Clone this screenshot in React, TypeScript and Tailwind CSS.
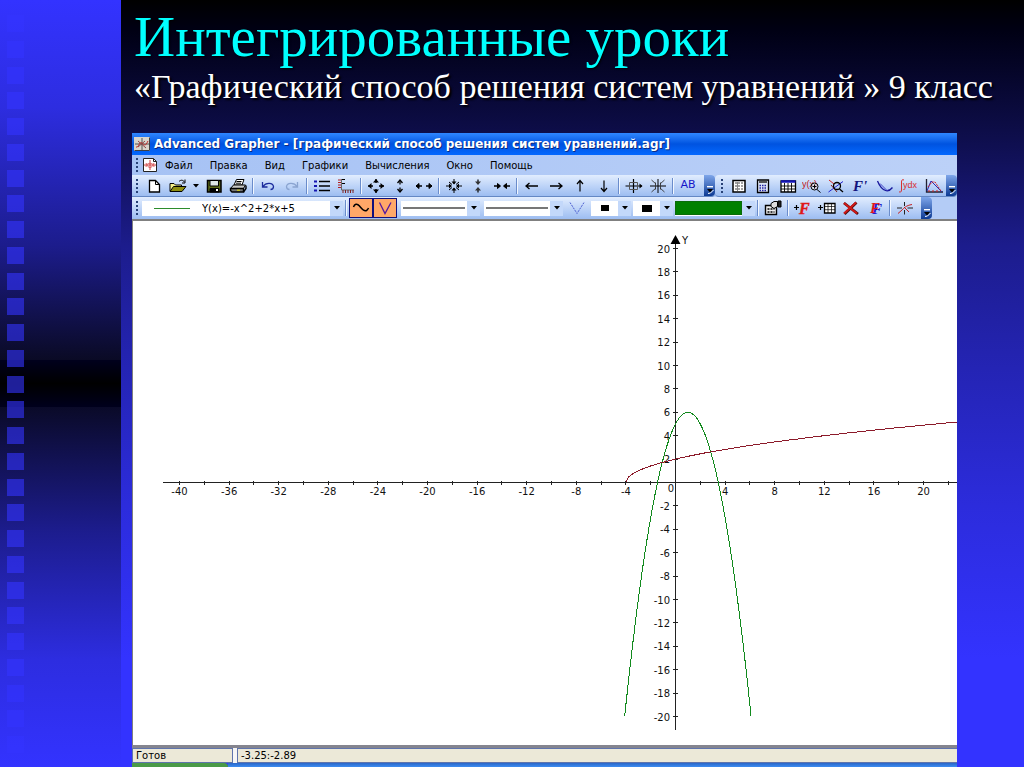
import React from "react";

const menuItems = ["Файл", "Правка", "Вид", "Графики", "Вычисления", "Окно", "Помощь"];

const Icon: React.FC<{ children: React.ReactNode }> = ({ children }) => (
  <svg
    viewBox="0 0 20 16"
    className="block h-4 w-5 shrink-0"
    fill="none"
    stroke="#000"
    aria-hidden="true"
  >
    {children}
  </svg>
);

const ToolButton: React.FC<{
  label: string;
  active?: boolean;
  children: React.ReactNode;
}> = ({ label, active, children }) => (
  <button
    type="button"
    aria-label={label}
    className={
      active
        ? "flex h-5 w-6 shrink-0 items-center justify-center border border-[#10107c] bg-[#ffa868]"
        : "flex h-5 w-6 shrink-0 items-center justify-center"
    }
  >
    {children}
  </button>
);

const Separator = () => (
  <div className="flex w-1.5 shrink-0 justify-center">
    <div className="h-4 w-px bg-[#6a8ccb]" />
    <div className="h-4 w-px bg-[#f1f7ff]" />
  </div>
);

const Grip = () => (
  <div className="flex w-2.5 shrink-0 flex-col items-center gap-0.5">
    <div className="size-0.5 bg-[#274176]" />
    <div className="size-0.5 bg-[#274176]" />
    <div className="size-0.5 bg-[#274176]" />
    <div className="size-0.5 bg-[#274176]" />
  </div>
);

const Overflow: React.FC<{ label: string }> = ({ label }) => (
  <button
    type="button"
    aria-label={label}
    className="flex h-full w-[11px] shrink-0 items-end justify-center rounded-r-sm bg-linear-to-b from-[#7fa6ea] to-[#0c3a94] pb-0.5"
  >
    <svg viewBox="0 0 8 8" className="block size-2" fill="#000" aria-hidden="true">
      <path d="M1 0h6v1.4H1z" fill="#fff" />
      <path d="M1 3h6L4 6.5z" />
      <path d="M2 7.5L4.5 7l3-3" stroke="#fff" fill="none" />
    </svg>
  </button>
);

const DropArrow = () => (
  <span className="flex h-[15px] w-[13px] shrink-0 items-center justify-center bg-[#c3d8fa]">
    <svg viewBox="0 0 6 4" className="block h-1 w-1.5" aria-hidden="true">
      <path d="M0 0h6L3 3.5z" fill="#000" />
    </svg>
  </span>
);

const Combo: React.FC<{
  label: string;
  options: string[];
  width: string;
  children: React.ReactNode;
}> = ({ label, options, width, children }) => (
  <label className={`relative flex h-[15px] shrink-0 items-center bg-white ${width}`}>
    <span className="flex flex-1 items-center justify-center">{children}</span>
    <DropArrow />
    <select aria-label={label} className="absolute inset-0 opacity-0">
      {options.map((option) => (
        <option key={option}>{option}</option>
      ))}
    </select>
  </label>
);

const NewIcon = () => (
  <Icon>
    <path d="M5.5 2.5h6l4 4v7.5h-10z" fill="#fff" strokeWidth="1.3" />
    <path d="M11.5 2.5v4h4" />
  </Icon>
);

const OpenIcon = () => (
  <Icon>
    <path d="M2 13V5.500h4l1.500 1.500h6V8" fill="#f5f08a" />
    <path d="M2 13.500L5.500 8.500H18L14 13.500z" fill="#8f8f10" />
    <path d="M11 3.500c2-2 4-1.500 5.500.5M17 1.500V5h-3" />
  </Icon>
);

const SaveIcon = () => (
  <Icon>
    <path d="M3.500 2.500h13.500v11.500h-13.500z" fill="#5c6b18" strokeWidth="1.500" />
    <path d="M6 2.500h8.500V8H6z" fill="#dfe7e7" />
    <path d="M6 10.500h9V14H6z" fill="#000" />
    <path d="M12 11h2v2h-2z" fill="#fff" stroke="none" />
  </Icon>
);

const PrintIcon = () => (
  <Icon>
    <path d="M6 7L8.500 1.500H16L14 7z" fill="#fff" />
    <path d="M8.500 3.500h5M8 5.200h5" />
    <path d="M2.500 10.500L5.500 7H17.500L15.500 10.500z" fill="#c8c8c8" />
    <path d="M2.500 10.500h13V14H4L2.500 12.500z" fill="#777" strokeWidth="1.400" />
    <path d="M15.500 14L18 10.500V7.500" strokeWidth="1.400" />
    <path d="M9 12.200h3" stroke="#e8e000" />
  </Icon>
);

const ListIcon = () => (
  <Icon>
    <path d="M2 3.500h3M2 8h3M2 12.500h3" stroke="#1515b0" strokeWidth="2.200" />
    <path d="M7 3.500h11M7 8h11M7 12.500h11" strokeWidth="1.300" />
  </Icon>
);

const RulerIcon = () => (
  <Icon>
    <path d="M5.500 1v11H18" stroke="#666" />
    <path d="M2 2h3M2 4.500h3M2 7h3M2 9.500h3" stroke="#b02020" />
    <path d="M7 12v3M9.500 12v3M12 12v3M14.500 12v3M17 12v3" stroke="#802020" />
    <path d="M6 1.500h3M6 5.500h3" />
  </Icon>
);

const OutAllIcon = () => (
  <Icon>
    <path d="M10 1v4M10 15v-4M2 8h5M18 8h-5" strokeWidth="1.300" />
    <path
      d="M7 4.500L10 1l3 3.500zM7 11.500l3 3.500 3-3.500zM5.500 5L2 8l3.500 3zM14.500 5L18 8l-3.500 3z"
      fill="#000"
      stroke="none"
    />
  </Icon>
);

const OutVerticalIcon = () => (
  <Icon>
    <path d="M10 2v4.500M10 14v-4.500" strokeWidth="1.300" />
    <path d="M7.500 5L10 2l2.500 3M7.500 11l2.500 3 2.500-3" strokeWidth="1.300" />
  </Icon>
);

const OutHorizontalIcon = () => (
  <Icon>
    <path d="M2 8h6M12 8h6" strokeWidth="1.500" />
    <path d="M5 5.500L2 8l3 2.500zM15 5.500L18 8l-3 2.500z" fill="#000" />
  </Icon>
);

const InAllIcon = () => (
  <Icon>
    <path d="M10 1v5M10 15v-5M2 8h5M18 8h-5M5 4l3 2.500M15 4l-3 2.500M5 12l3-2.500M15 12l-3-2.500" />
    <path
      d="M7.500 3.500L10 6.500l2.500-3zM7.500 12.500L10 9.500l2.500 3zM5 5.500L8 8l-3 2.500zM15 5.500L12 8l3 2.500z"
      fill="#000"
      stroke="none"
    />
  </Icon>
);

const InVerticalIcon = () => (
  <Icon>
    <path d="M10 1.500v4M10 14.500v-4" strokeWidth="1.200" />
    <path d="M7 3.500L10 7l3-3.500zM7 12.500L10 9l3 3.500z" fill="#333" stroke="none" />
  </Icon>
);

const InHorizontalIcon = () => (
  <Icon>
    <path d="M2 8h6M12 8h6" strokeWidth="1.500" />
    <path d="M5.500 5.500L8.500 8l-3 2.500zM14.500 5.500L11.500 8l3 2.500z" fill="#000" />
  </Icon>
);

const GridZoomIcon = () => (
  <Icon>
    <path d="M1.500 8H18M9.500 1v14" strokeWidth="1.200" />
    <path d="M5.500 4.500h8v7h-8z" stroke="#555" />
    <path d="M15.500 5.500L18.500 8l-3 2.500z" fill="#000" stroke="none" />
  </Icon>
);

const CenterIcon = () => (
  <Icon>
    <path d="M2 8h16M10 1v14" />
    <path
      d="M7.500 4.500v7M12.500 4.500v7M3.500 2l4.500 4M16.500 2l-4.500 4M3.500 14l4.500-4M16.500 14l-4.500-4"
      stroke="#333"
      strokeWidth=".9"
    />
  </Icon>
);

const GridSheetIcon = () => (
  <Icon>
    <path d="M4 2.500h12v11.500H4z" fill="#fff" strokeWidth="1.500" />
    <path d="M6 5h8M6 8h8M6 11h8" strokeDasharray="2 1" stroke="#444" />
    <path d="M8.500 4v9" stroke="#888" />
  </Icon>
);

const CalculatorIcon = () => (
  <Icon>
    <path d="M4.500 2h11v12.500h-11z" fill="#dce4f4" strokeWidth="1.300" />
    <path d="M6 4h8" strokeWidth="1.800" stroke="#444" />
    <path
      d="M6.500 7.500h7M6.500 10h7M6.500 12.500h7"
      stroke="#2020a0"
      strokeDasharray="1.500 1"
      strokeWidth="1.500"
    />
  </Icon>
);

const TableIcon = () => (
  <Icon>
    <path d="M3 3h14.500v11H3z" fill="#fff" strokeWidth="1.300" />
    <path d="M3 3.500h14.500" stroke="#1414b4" strokeWidth="2.500" />
    <path d="M3 8h14.500M3 11h14.500M6.500 5v9M10 5v9M13.500 5v9" strokeWidth=".9" />
  </Icon>
);

const EvaluateIcon = () => (
  <Icon>
    <text x="0" y="9" fill="#c01414" stroke="none" className="font-['Liberation_Sans'] text-[9px]">
      y(x)
    </text>
    <circle cx="12.500" cy="8.500" r="3.500" fill="#eee" fillOpacity=".6" />
    <path d="M15 11.500l3.500 3M12.500 6.500v4M10.500 8.500h4" />
  </Icon>
);

const IntersectIcon = () => (
  <Icon>
    <path d="M3 2l5 4" stroke="#d02020" />
    <path d="M2.500 14L17 3.500" stroke="#2020d0" />
    <path d="M5 7l6 7" stroke="#802020" />
    <circle cx="11" cy="8" r="3.500" strokeWidth="1.300" />
    <path d="M13.500 11l3.500 3" strokeWidth="1.300" />
  </Icon>
);

const DerivativeIcon = () => (
  <Icon>
    <text
      x="2"
      y="13"
      fill="#14147c"
      stroke="none"
      className="font-['Liberation_Serif'] text-[15px] font-bold italic"
    >
      F'
    </text>
  </Icon>
);

const TangentIcon = () => (
  <Icon>
    <path d="M2.500 3c2 5 4 8 8 9.500 3 1 5-.5 7-3" stroke="#18189c" strokeWidth="1.300" />
    <path d="M5 5.500l7.500 7.500" stroke="#4040c8" />
  </Icon>
);

const IntegralIcon = () => (
  <Icon>
    <path d="M5 2c-2-1-2.500.5-2.500 2v8c0 2-1 2.500-2.500 1.800" stroke="#d83030" />
    <text x="4" y="10" fill="#d83030" stroke="none" className="font-['Liberation_Sans'] text-[9px]">
      ydx
    </text>
  </Icon>
);

const PlotIcon = () => (
  <Icon>
    <path d="M2.500 1v13H19" strokeWidth="1.300" stroke="#223" />
    <path d="M3 13l4-10 6 6 5 5" stroke="#2a2ab0" />
    <path d="M4 9l4-5h3l2 3 4 6" stroke="#d02020" strokeDasharray="2 1" />
    <path d="M5 14v-2M9 14v-2M13 14v-2" stroke="#d02020" />
  </Icon>
);

const WaveIcon = () => (
  <Icon>
    <path d="M2.500 7c1-3 3.500-4 6-1s4.500 6 7 4.500c1-.6 1.500-1.500 2-2.500" strokeWidth="1.500" />
  </Icon>
);

const VIcon = () => (
  <Icon>
    <path d="M4.500 2.500L10 13.500 16 2.500" stroke="#5418a0" strokeWidth="1.300" />
  </Icon>
);

const DottedVIcon = () => (
  <Icon>
    <path d="M3 2.500l7 11 7-11" stroke="#4a5cd0" strokeDasharray="2 1" />
  </Icon>
);

const PropertiesIcon = () => (
  <Icon>
    <path d="M2.500 5.500h11v9h-11z" fill="#eee" strokeWidth="1.400" />
    <path d="M8 3.500l3-2h3.500v5l-3.500 2-3-2z" fill="#ddd" />
    <path d="M15 1h3v6h-3z" fill="#222" />
    <path d="M4.500 9h7M4.500 12h7" strokeDasharray="2 1" strokeWidth="1.300" />
  </Icon>
);

const AddFunctionIcon = () => (
  <Icon>
    <path d="M1 7.500h5M3.500 5v5" strokeWidth="1.200" />
    <text
      x="6"
      y="14"
      fill="#e01818"
      stroke="#e01818"
      strokeWidth=".4"
      className="font-['Liberation_Serif'] text-[16px] font-bold italic"
    >
      F
    </text>
  </Icon>
);

const AddTableIcon = () => (
  <Icon>
    <path d="M1 7.500h5M3.500 5v5" strokeWidth="1.200" />
    <path d="M7.500 3.500h10.500v9.500H7.500z" fill="#fff" strokeWidth="1.300" />
    <path d="M7.500 6.500H18M7.500 9.700H18M11 4v9M14.500 4v9" strokeWidth=".7" />
  </Icon>
);

const DeleteIcon = () => (
  <Icon>
    <path d="M3 3l14 11M3.500 14L15.500 2.500" stroke="#501010" strokeWidth="2.800" />
    <path d="M3 3l13 10.500M3 13.500L15 2.500" stroke="#d01818" strokeWidth="2" />
  </Icon>
);

const TraceIcon = () => (
  <Icon>
    <path d="M2 8h5M9.500 2v4M12.500 8H18M9.500 10v4.500" stroke="#222" />
    <path d="M3 13.500l4-3.500c2-2 4-4.500 10-5.500M9 7l5 5" stroke="#c82020" />
  </Icon>
);

const AppIcon = () => (
  <svg viewBox="0 0 16 14" className="block h-3.5 w-4 shrink-0" fill="none" aria-hidden="true">
    <path d="M0 0h16v14H0z" fill="#d8d4cc" />
    <path d="M.5 13.500h15V.5" stroke="#404040" />
    <path d="M1 7h14M8 1v12" stroke="#555" />
    <path d="M2 10c3 1 3-6 6-4s3 4 6-2" stroke="#c02828" />
    <path d="M4 4l8 7M4 10l7-6" stroke="#8a4848" />
  </svg>
);

const DocIcon = () => (
  <svg viewBox="0 0 16 14" className="block h-3.5 w-4 shrink-0" fill="none" aria-hidden="true">
    <path d="M1.500.5h10l3 3v10h-13z" fill="#fff" stroke="#222" />
    <path d="M11.500.5v3h3" stroke="#222" />
    <path d="M2 7h12M8 2v10" stroke="#d04040" />
    <path d="M4 9c0-5 8-5 8 0M4 5c2 6 6 6 8 0" stroke="#d86060" />
  </svg>
);

// graph geometry, in viewBox units
const ORIGIN_X = 542.5;
const ORIGIN_Y = 261.5;
const STEP_X = 12.4;
const STEP_Y = 11.7;

const toX = (x: number) => ORIGIN_X + x * STEP_X;
const toY = (y: number) => ORIGIN_Y - y * STEP_Y;

const range = (from: number, to: number, step: number) => {
  const values: number[] = [];
  for (let v = from; v <= to + 1e-9; v += step) values.push(v);
  return values;
};

const curve = (fn: (x: number) => number, from: number, to: number) =>
  range(from, to, (to - from) / 120)
    .map((x) => `${toX(x).toFixed(1)},${toY(fn(x)).toFixed(1)}`)
    .join(" ");

const Graph = () => (
  <svg
    viewBox="0 0 824 524"
    className="block w-full font-['DejaVu_Sans',sans-serif] text-[10px]"
    role="img"
    aria-label="Y(x)=-x^2+2*x+5"
  >
    <g stroke="#222" fill="none" shapeRendering="crispEdges">
      <path d={`M30 ${ORIGIN_Y}H824M${ORIGIN_X} 16V509`} />
      {range(-40, 22, 2).map((x) => (
        <path key={x} d={`M${toX(x)} ${ORIGIN_Y - 2}v4`} />
      ))}
      {range(-20, 20, 2).map((y) => (
        <path key={y} d={`M${ORIGIN_X - 2.5} ${toY(y)}h5`} />
      ))}
    </g>
    <path d="M542.500 14l5 9h-10z" fill="#000" />
    <g fill="#111">
      {range(-40, 20, 4)
        .filter((x) => x !== 0)
        .map((x) => (
          <text key={x} x={toX(x)} y="274" textAnchor="middle">
            {x}
          </text>
        ))}
      {range(-20, 20, 2)
        .filter((y) => y !== 0)
        .map((y) => (
          <text key={y} x="537" y={toY(y) + 4} textAnchor="end">
            {y}
          </text>
        ))}
      <text x="541" y="271" textAnchor="end">
        0
      </text>
      <text x="549" y="23">
        Y
      </text>
    </g>
    <polyline
      points={curve((x) => -x * x + 2 * x + 5, 1 - Math.sqrt(26), 1 + Math.sqrt(26))}
      fill="none"
      stroke="#128a1e"
      shapeRendering="crispEdges"
    />
    <polyline
      points={curve((x) => Math.sqrt(Math.max(0, x + 4)), -4, 22.8)}
      fill="none"
      stroke="#8c1a2a"
      shapeRendering="crispEdges"
    />
  </svg>
);

const MainToolbar = () => (
  <div className="flex h-[22px] items-stretch bg-[#b4ccf6]">
    <div className="flex items-center rounded-r-sm border-b border-[#6488c4] bg-linear-to-b from-[#e2edfe] to-[#9dbdf1]">
      <Grip />
      <ToolButton label="Новый"><NewIcon /></ToolButton>
      <ToolButton label="Открыть"><OpenIcon /></ToolButton>
      <button type="button" aria-label="Недавние файлы" className="flex w-3 shrink-0 justify-center">
        <svg viewBox="0 0 6 4" className="block h-1 w-1.5" aria-hidden="true">
          <path d="M0 0h6L3 3.500z" />
        </svg>
      </button>
      <ToolButton label="Сохранить"><SaveIcon /></ToolButton>
      <ToolButton label="Печать"><PrintIcon /></ToolButton>
      <Separator />
      <ToolButton label="Отменить">
        <Icon>
          <path d="M4.500 4v5h5M5 8.500c3-4.500 10-4 10.500 0 0 2-1.500 3-3 3" stroke="#1c2c9c" strokeWidth="1.300" />
        </Icon>
      </ToolButton>
      <ToolButton label="Повторить">
        <Icon>
          <path d="M15.500 4v5h-5M15 8.500c-3-4.500-10-4-10.500 0 0 2 1.500 3 3 3" stroke="#8aa4d0" strokeWidth="1.300" />
        </Icon>
      </ToolButton>
      <Separator />
      <ToolButton label="Список графиков"><ListIcon /></ToolButton>
      <ToolButton label="Свойства осей"><RulerIcon /></ToolButton>
      <Separator />
      <ToolButton label="Увеличить"><OutAllIcon /></ToolButton>
      <ToolButton label="Увеличить по Y"><OutVerticalIcon /></ToolButton>
      <ToolButton label="Увеличить по X"><OutHorizontalIcon /></ToolButton>
      <Separator />
      <ToolButton label="Уменьшить"><InAllIcon /></ToolButton>
      <ToolButton label="Уменьшить по Y"><InVerticalIcon /></ToolButton>
      <ToolButton label="Уменьшить по X"><InHorizontalIcon /></ToolButton>
      <Separator />
      <ToolButton label="Влево">
        <Icon><path d="M4 8h12M7.500 5L4 8l3.500 3" strokeWidth="1.300" /></Icon>
      </ToolButton>
      <ToolButton label="Вправо">
        <Icon><path d="M4 8h12M12.500 5L16 8l-3.500 3" strokeWidth="1.300" /></Icon>
      </ToolButton>
      <ToolButton label="Вверх">
        <Icon><path d="M10 2.500v11M7 6l3-3.500L13 6" strokeWidth="1.200" /></Icon>
      </ToolButton>
      <ToolButton label="Вниз">
        <Icon><path d="M10 2.500v11M7 10l3 3.500 3-3.500" strokeWidth="1.200" /></Icon>
      </ToolButton>
      <Separator />
      <ToolButton label="Масштаб"><GridZoomIcon /></ToolButton>
      <ToolButton label="Центр"><CenterIcon /></ToolButton>
      <Separator />
      <button type="button" className="w-6 shrink-0 text-center text-[11px] text-[#1616c8]">
        AB
      </button>
      <div className="w-1 shrink-0" />
      <Overflow label="Кнопки панели" />
    </div>
    <div className="flex flex-1 items-center rounded-sm border-b border-[#6488c4] bg-linear-to-b from-[#e2edfe] to-[#9dbdf1] pl-0.5">
      <Grip />
      <div className="grid flex-1 auto-cols-fr grid-flow-col justify-items-center">
        <ToolButton label="Сетка"><GridSheetIcon /></ToolButton>
        <ToolButton label="Калькулятор"><CalculatorIcon /></ToolButton>
        <ToolButton label="Таблица"><TableIcon /></ToolButton>
        <ToolButton label="Вычислить"><EvaluateIcon /></ToolButton>
        <ToolButton label="Пересечение"><IntersectIcon /></ToolButton>
        <ToolButton label="Производная"><DerivativeIcon /></ToolButton>
        <ToolButton label="Касательная"><TangentIcon /></ToolButton>
        <ToolButton label="Интеграл"><IntegralIcon /></ToolButton>
        <ToolButton label="Регрессия"><PlotIcon /></ToolButton>
      </div>
      <Overflow label="Кнопки вычислений" />
    </div>
  </div>
);

const GraphToolbar = () => (
  <div className="flex h-[22px] items-stretch bg-[#b4ccf6]">
    <div className="flex items-center rounded-r-sm bg-linear-to-b from-[#e2edfe] to-[#9dbdf1]">
      <Grip />
      <div className="relative flex h-[15px] w-[201px] shrink-0 items-center bg-white pl-3">
        <div className="h-px w-9 bg-[#2c8c2c]" />
        <select
          aria-label="Функция"
          className="h-[15px] flex-1 appearance-none pl-3 text-[10px] leading-[15px] text-black"
        >
          <option>Y(x)=-x^2+2*x+5</option>
          <option>Y(x)=sqrt(x+4)</option>
        </select>
        <DropArrow />
      </div>
      <Separator />
      <ToolButton label="Линия" active><WaveIcon /></ToolButton>
      <ToolButton label="Соединять точки" active><VIcon /></ToolButton>
      <div className="w-1 shrink-0" />
      <Combo label="Стиль линии" options={["Сплошная", "Пунктир"]} width="w-[79px]">
        <span className="h-0.5 w-[62px] bg-[#777]" />
      </Combo>
      <div className="w-1 shrink-0" />
      <Combo label="Толщина линии" options={["1", "2", "3"]} width="w-[79px]">
        <span className="h-0.5 w-[62px] bg-[#777]" />
      </Combo>
      <div className="w-0.5 shrink-0" />
      <ToolButton label="Точки"><DottedVIcon /></ToolButton>
      <div className="w-0.5 shrink-0" />
      <Combo label="Вид точки" options={["Квадрат", "Круг"]} width="w-10">
        <span className="h-1.5 w-2 bg-black" />
      </Combo>
      <div className="w-0.5 shrink-0" />
      <Combo label="Размер точки" options={["1", "2", "3"]} width="w-10">
        <span className="h-[7px] w-2.5 bg-black" />
      </Combo>
      <div className="w-0.5 shrink-0" />
      <Combo label="Цвет" options={["Зелёный", "Красный"]} width="w-20">
        <span className="h-3.5 flex-1 border border-[#0a6c0a] bg-[#008000]" />
      </Combo>
      <Separator />
      <ToolButton label="Свойства"><PropertiesIcon /></ToolButton>
      <Separator />
      <ToolButton label="Добавить график"><AddFunctionIcon /></ToolButton>
      <ToolButton label="Добавить таблицу"><AddTableIcon /></ToolButton>
      <ToolButton label="Удалить"><DeleteIcon /></ToolButton>
      <ToolButton label="Дублировать">
        <span className="font-['Liberation_Serif',serif] text-[15px] leading-4 font-bold text-[#e01818] italic [text-shadow:2px_1px_0_#1c1cd0]">
          F
        </span>
      </ToolButton>
      <Separator />
      <ToolButton label="Трассировка"><TraceIcon /></ToolButton>
      <div className="w-1 shrink-0" />
      <Overflow label="Кнопки графиков" />
    </div>
  </div>
);

const GrapherWindow = () => (
  <section className="mr-[67px] ml-[11px] overflow-hidden font-['DejaVu_Sans',sans-serif] text-[10px] text-black">
    <header className="flex h-[22px] items-center gap-1 bg-linear-to-b from-[#2f86ff] via-[#0053e0] to-[#0468ff] pl-0.5">
      <AppIcon />
      <h2 className="text-[12px] font-bold whitespace-nowrap text-white [text-shadow:1px_1px_0_#0a2a80]">
        Advanced Grapher - [графический способ решения систем уравнений.agr]
      </h2>
    </header>
    <nav className="flex h-5 items-center bg-linear-to-r from-[#a6c2f4] to-[#bcd1f8]">
      <Grip />
      <DocIcon />
      <div className="flex gap-[17px] pl-[7px]">
        {menuItems.map((item) => (
          <button key={item} type="button">
            {item}
          </button>
        ))}
      </div>
    </nav>
    <MainToolbar />
    <GraphToolbar />
    <div className="border-t-2 border-l border-[#808080] bg-white">
      <Graph />
    </div>
    <footer>
      <div className="flex h-[18px] gap-1 border-t-3 border-[#85858f] bg-[#f6f6f6]">
        <div className="w-[101px] border border-[#5f74ac] bg-[#ece9d8] pl-[3px] leading-[13px]">Готов</div>
        <div className="flex-1 border border-r-0 border-[#5f74ac] bg-[#ece9d8] pl-[3px] leading-[13px]">
          -3.25:-2.89
        </div>
      </div>
      <div className="flex h-1">
        <div className="w-24 rounded-tr-sm bg-[#4a9a48]" />
        <div className="flex-1 bg-linear-to-b from-[#2a66c8] to-[#3d8df2]" />
      </div>
    </footer>
  </section>
);

const squares = Array.from({ length: 29 }, (_, i) => i);

const App: React.FC = () => (
  <div className="flex min-h-screen overflow-hidden">
    <aside className="flex w-[121px] shrink-0 flex-col justify-between bg-[linear-gradient(to_bottom,#3333ff_0%,#2d2de0_14%,#1c1c8c_32%,#0a0a24_47%,#00001c_47%,#000_50%,#00001c_53%,#0a0a28_53%,#1c1c8c_69%,#2d2de0_86%,#3333ff_100%)] pt-[15px] pb-3.5 pl-[7px]">
      {squares.map((i) => (
        <div key={i} className="size-[17px] bg-[#3333ff]/60" />
      ))}
    </aside>
    <main className="min-w-0 flex-1 bg-[linear-gradient(to_bottom,#000_0%,#000014_4%,#0d0d48_17%,#1c1c8c_32%,#2424b4_48%,#2c2cdc_66%,#3333ff_86%,#3333ff_100%)] pt-[7px]">
      <div className="mb-[26px] pl-[13px] font-['Liberation_Serif',serif] whitespace-nowrap">
        <h1 className="text-[57px] leading-[60px] text-[#00ffff] [text-shadow:1px_1px_2px_#000]">
          Интегрированные уроки
        </h1>
        <p className="text-[34px] leading-10 text-white [text-shadow:2px_2px_2px_#000]">
          «Графический способ решения систем уравнений » 9 класс
        </p>
      </div>
      <GrapherWindow />
    </main>
  </div>
);

export default App;
